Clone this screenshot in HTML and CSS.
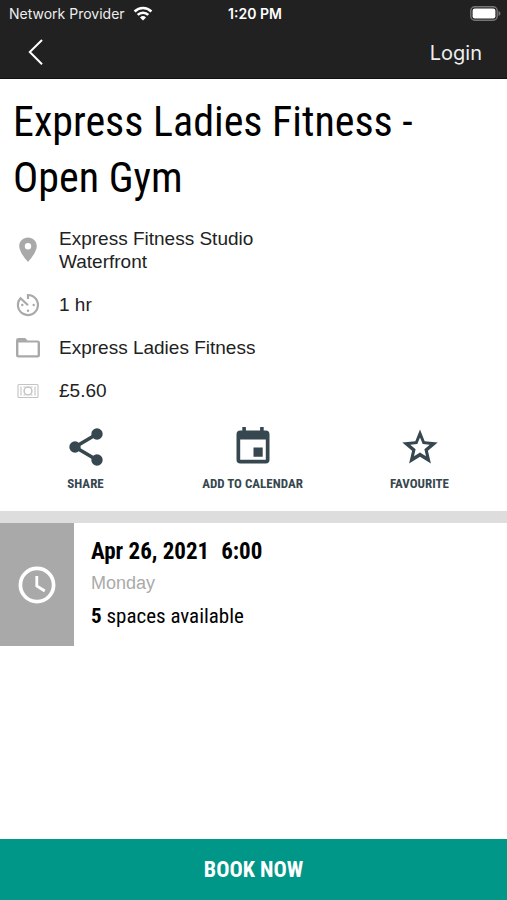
FILE: index.html
```html
<!DOCTYPE html>
<html lang="en">
<head>
<meta charset="utf-8">
<meta name="viewport" content="width=device-width, initial-scale=1">
<title>Express Ladies Fitness - Open Gym</title>
<link rel="stylesheet" href="styles.css">
</head>
<body>
<header class="top">
  <div class="status">
    <div class="carrier">
      <span>Network Provider</span>
      <svg width="20" height="16" viewBox="0 0 20 16" aria-hidden="true">
        <g fill="none" stroke="#fff" stroke-width="2.6"><path d="M1.6 5.500a12 12 0 0 1 16.800 0"/><path d="M4.700 8.900a7.600 7.600 0 0 1 10.600 0"/></g>
        <path fill="#fff" d="M10 14.500l-3-3.100a4.300 4.300 0 0 1 6 0z"/>
      </svg>
    </div>
    <span class="time">1:20 PM</span>
    <svg class="battery" width="31" height="15" viewBox="0 0 31 15" aria-hidden="true">
      <rect x=".8" y=".8" width="26.4" height="13.4" rx="4" fill="none" stroke="#777" stroke-width="1.4"/>
      <rect x="2.6" y="2.6" width="22.8" height="9.8" rx="2.2" fill="#fff"/>
      <path fill="#777" d="M28.5 5c2.6 1 2.6 4 0 5z"/>
    </svg>
  </div>
  <nav class="nav">
    <a class="back" href="#" aria-label="Back">
      <svg width="16" height="28" viewBox="0 0 16 28" aria-hidden="true"><path d="M14 1L1.800 13l12.200 12.200" fill="none" stroke="#fff" stroke-width="2"/></svg>
    </a>
    <a class="login" href="#">Login</a>
  </nav>
</header>
<main class="content">
  <h1 class="title">Express Ladies Fitness - Open Gym</h1>
  <ul class="details">
    <li class="detail">
      <svg class="detail-icon" viewBox="0 0 28 28" aria-hidden="true"><path fill="#a9a9a9" fill-rule="evenodd" d="M14 1.500c-4.900 0-8.800 3.900-8.800 8.700C5.200 16.500 14 26 14 26s8.800-9.500 8.800-15.800c0-4.800-3.900-8.700-8.800-8.700zm0 5.500a3.200 3.200 0 1 1 0 6.400 3.200 3.200 0 0 1 0-6.400z"/></svg>
      <span>Express Fitness Studio<br>Waterfront</span>
    </li>
    <li class="detail">
      <svg class="detail-icon" viewBox="0 0 28 28" aria-hidden="true">
        <path d="M14 8V4a10 10 0 1 1-7.400 3.200L14 14.300" fill="none" stroke="#a9a9a9" stroke-width="2.200"/>
        <g fill="#a9a9a9"><circle cx="8.300" cy="14" r="1.200"/><circle cx="19.700" cy="14" r="1.200"/><circle cx="14" cy="19.700" r="1.200"/></g>
      </svg>
      <span>1 hr</span>
    </li>
    <li class="detail">
      <svg class="detail-icon" viewBox="0 0 28 28" aria-hidden="true"><path fill="#a9a9a9" fill-rule="evenodd" d="M4.400 4h6.800l2.400 2.400h10a2.400 2.400 0 0 1 2.400 2.400v12.400a2.400 2.400 0 0 1-2.400 2.400H4.400A2.400 2.400 0 0 1 2 21.200V6.400A2.400 2.400 0 0 1 4.400 4zM4.400 8.600v12.600h19.200V8.600z"/></svg>
      <span>Express Ladies Fitness</span>
    </li>
    <li class="detail">
      <svg class="detail-icon" viewBox="0 0 28 28" aria-hidden="true"><g fill="none" stroke="#c3c3c3" stroke-width="1.100"><rect x="4" y="7.500" width="20" height="13" rx="1"/><path d="M7 9.500v9M21 9.500v9M9.500 10h2M16.500 10h2M9.500 18h2M16.500 18h2"/><circle cx="14" cy="14" r="3.900" stroke-width="1.500"/></g></svg>
      <span>£5.60</span>
    </li>
  </ul>
  <div class="actions">
    <button class="action" type="button">
      <svg width="44" height="44" viewBox="0 0 44 44" aria-hidden="true"><path d="M33 9L11 22l22 13" fill="none" stroke="#37474f" stroke-width="3.600"/><g fill="#37474f"><circle cx="33" cy="9" r="5.700"/><circle cx="11" cy="22" r="5.700"/><circle cx="33" cy="35" r="5.700"/></g></svg>
      <span>SHARE</span>
    </button>
    <button class="action" type="button">
      <svg width="44" height="44" viewBox="0 0 44 44" aria-hidden="true"><path fill="#37474f" fill-rule="evenodd" d="M11.300 2h3.600v3.500h14.200V2h3.600v3.500h2A3.800 3.800 0 0 1 38.500 9.300v25.400a3.800 3.800 0 0 1-3.800 3.800H9.300a3.800 3.800 0 0 1-3.800-3.800V9.300a3.800 3.800 0 0 1 3.800-3.800h2zM9.200 14.500v20.300h25.600V14.500zM22.500 22.500h9.200v9.200h-9.200z"/></svg>
      <span>ADD TO CALENDAR</span>
    </button>
    <button class="action" type="button">
      <svg width="44" height="44" viewBox="0 0 44 44" aria-hidden="true"><path fill="#37474f" fill-rule="evenodd" d="M22 4.500l4.700 11.800 13 1.200-9.800 8.300 3 12.700L22 31.700l-10.900 6.800 3-12.700-9.800-8.300 13-1.200zM22 12.600l-2.700 6.500-7 .6 5.300 4.600-1.600 6.900 6-3.700 6 3.700-1.600-6.900 5.300-4.600-7-.6z"/></svg>
      <span>FAVOURITE</span>
    </button>
  </div>
  <section class="session">
    <div class="tile">
      <svg width="40" height="40" viewBox="0 0 40 40" aria-hidden="true"><g fill="none" stroke="#fff"><circle cx="20" cy="20" r="16.600" stroke-width="3.700"/><path d="M19.800 11v10l8 5" stroke-width="2.800"/></g></svg>
    </div>
    <div class="session-info">
      <div class="date"><span>Apr 26, 2021</span><span>6:00</span></div>
      <div class="day">Monday</div>
      <div class="spaces"><b>5</b> spaces available</div>
    </div>
  </section>
</main>
<button class="book" type="button">BOOK NOW</button>
</body>
</html>
```
FILE: styles.css
```css
* { box-sizing: border-box; }

body {
  margin: 0;
  min-height: 100vh;
  display: flex;
  flex-direction: column;
  background: #fff;
  color: #000;
  font-family: "Liberation Sans", sans-serif;
}

button {
  border: 0;
  padding: 0;
  background: none;
  cursor: pointer;
}

svg { display: block; flex: none; }

.top {
  background: #212121;
  color: #fff;
  border-bottom: 1px solid #111;
}

.status {
  display: grid;
  grid-template-columns: 1fr auto 1fr;
  align-items: center;
  height: 27px;
  padding: 0 6px 0 9px;
  font: 14px/27px Inter, sans-serif;
}

.carrier { display: flex; align-items: center; gap: 8px; color: #eee; }
.time { font-weight: 600; }
.battery { justify-self: end; }

.nav {
  display: flex;
  justify-content: space-between;
  align-items: center;
  height: 51px;
  padding: 0 25px 0 28px;
}

.login {
  color: #eee;
  font: 20px/24px Inter, sans-serif;
  text-decoration: none;
}

.content { flex: 1; }

.title {
  margin: 0;
  padding: 15px 13px 0;
  font: 400 42px/56px "Roboto Condensed", "Liberation Sans Narrow", sans-serif;
}

.details {
  display: grid;
  gap: 20px;
  margin: 0;
  padding: 21px 14px 0;
  list-style: none;
  color: #222;
  font-size: 19px;
  line-height: 23px;
}

.detail { display: flex; align-items: center; gap: 17px; }
.detail-icon { width: 28px; height: 28px; margin: -3px 0; }

.actions {
  display: grid;
  grid-template-columns: repeat(3, 1fr);
  padding: 23px 4px 17px 2px;
}

.action {
  display: flex;
  flex-direction: column;
  align-items: center;
  gap: 5px;
  color: #37474f;
  font: 700 13px/20px "Roboto Condensed", "Liberation Sans Narrow", sans-serif;
}

.session {
  display: flex;
  border-top: 12px solid #ddd;
}

.tile {
  display: flex;
  align-items: center;
  justify-content: center;
  width: 74px;
  background: #a9a9a9;
}

.session-info {
  padding: 12px 17px;
}

.date,
.spaces {
  font: 23px/34px "Roboto Condensed", "Liberation Sans Narrow", sans-serif;
}

.date { display: flex; gap: 12px; font-weight: 700; }
.day { color: #aaa; font-size: 18px; line-height: 29px; }
.spaces { font-size: 21px; line-height: 36px; }

.book {
  height: 61px;
  background: #009688;
  color: #fff;
  font: 700 22px/30px "Roboto Condensed", "Liberation Sans Narrow", sans-serif;
}
```
